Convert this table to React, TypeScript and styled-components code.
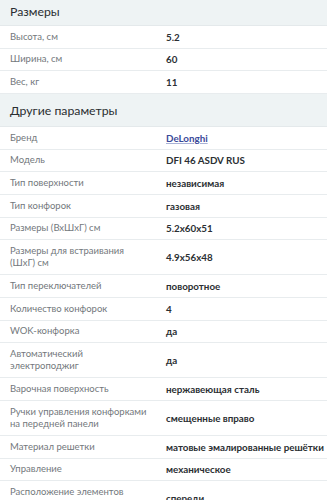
import React from "react";
import styled, { createGlobalStyle } from "styled-components";

const GlobalStyle = createGlobalStyle`
  body {
    margin: 0;
    background: #fff;
    font-family: Lato, "Open Sans", sans-serif;
  }
  * {
    box-sizing: border-box;
  }
`;

const Wrapper = styled.div`
  width: 327px;
  display: flex;
  flex-direction: column;
`;

const SectionTitle = styled.div<{ $first?: boolean }>`
  display: flex;
  align-items: center;
  height: ${(p) => (p.$first ? "26px" : "33px")};
  padding: 0 10px ${(p) => (p.$first ? "2px" : "0")};
  background: #eef3f4;
  color: #2a2e31;
  font-size: 12.3px;
  border-bottom: 1px solid #e4e9eb;
`;

const Row = styled.div`
  display: grid;
  grid-template-columns: 156px 1fr;
  align-items: center;
  padding: 4.7px 0 4.7px 10px;
  border-bottom: 1px solid #e8ecee;
`;

const Label = styled.div`
  color: #73787c;
  font-size: 9.5px;
  line-height: 12.3px;
  white-space: pre-line;
`;

const Value = styled.div`
  color: #2b2f33;
  font-size: 9.8px;
  line-height: 12.3px;
  font-weight: 700;
  white-space: nowrap;
`;

const BrandLink = styled.a`
  color: #3a4a9a;
  text-decoration: underline;
  text-decoration-color: #a9b2d6;
`;

type Spec = { label: string; value: string; link?: boolean };

const sizes: Spec[] = [
  { label: "Высота, см", value: "5.2" },
  { label: "Ширина, см", value: "60" },
  { label: "Вес, кг", value: "11" },
];

const other: Spec[] = [
  { label: "Бренд", value: "DeLonghi", link: true },
  { label: "Модель", value: "DFI 46 ASDV RUS" },
  { label: "Тип поверхности", value: "независимая" },
  { label: "Тип конфорок", value: "газовая" },
  { label: "Размеры (ВхШхГ) см", value: "5.2x60x51" },
  { label: "Размеры для встраивания\n(ШхГ) см", value: "4.9x56x48" },
  { label: "Тип переключателей", value: "поворотное" },
  { label: "Количество конфорок", value: "4" },
  { label: "WOK-конфорка", value: "да" },
  { label: "Автоматический\nэлектроподжиг", value: "да" },
  { label: "Варочная поверхность", value: "нержавеющая сталь" },
  { label: "Ручки управления конфорками\nна передней панели", value: "смещенные вправо" },
  { label: "Материал решетки", value: "матовые эмалированные решётки" },
  { label: "Управление", value: "механическое" },
  { label: "Расположение элементов\nуправления", value: "спереди" },
];

function SpecRow({ spec }: { spec: Spec }) {
  return (
    <Row>
      <Label>{spec.label}</Label>
      <Value>
        {spec.link ? <BrandLink href="#">{spec.value}</BrandLink> : spec.value}
      </Value>
    </Row>
  );
}

export default function App() {
  return (
    <Wrapper>
      <GlobalStyle />
      <SectionTitle $first>Размеры</SectionTitle>
      {sizes.map((s) => (
        <SpecRow key={s.label} spec={s} />
      ))}
      <SectionTitle>Другие параметры</SectionTitle>
      {other.map((s) => (
        <SpecRow key={s.label} spec={s} />
      ))}
    </Wrapper>
  );
}
